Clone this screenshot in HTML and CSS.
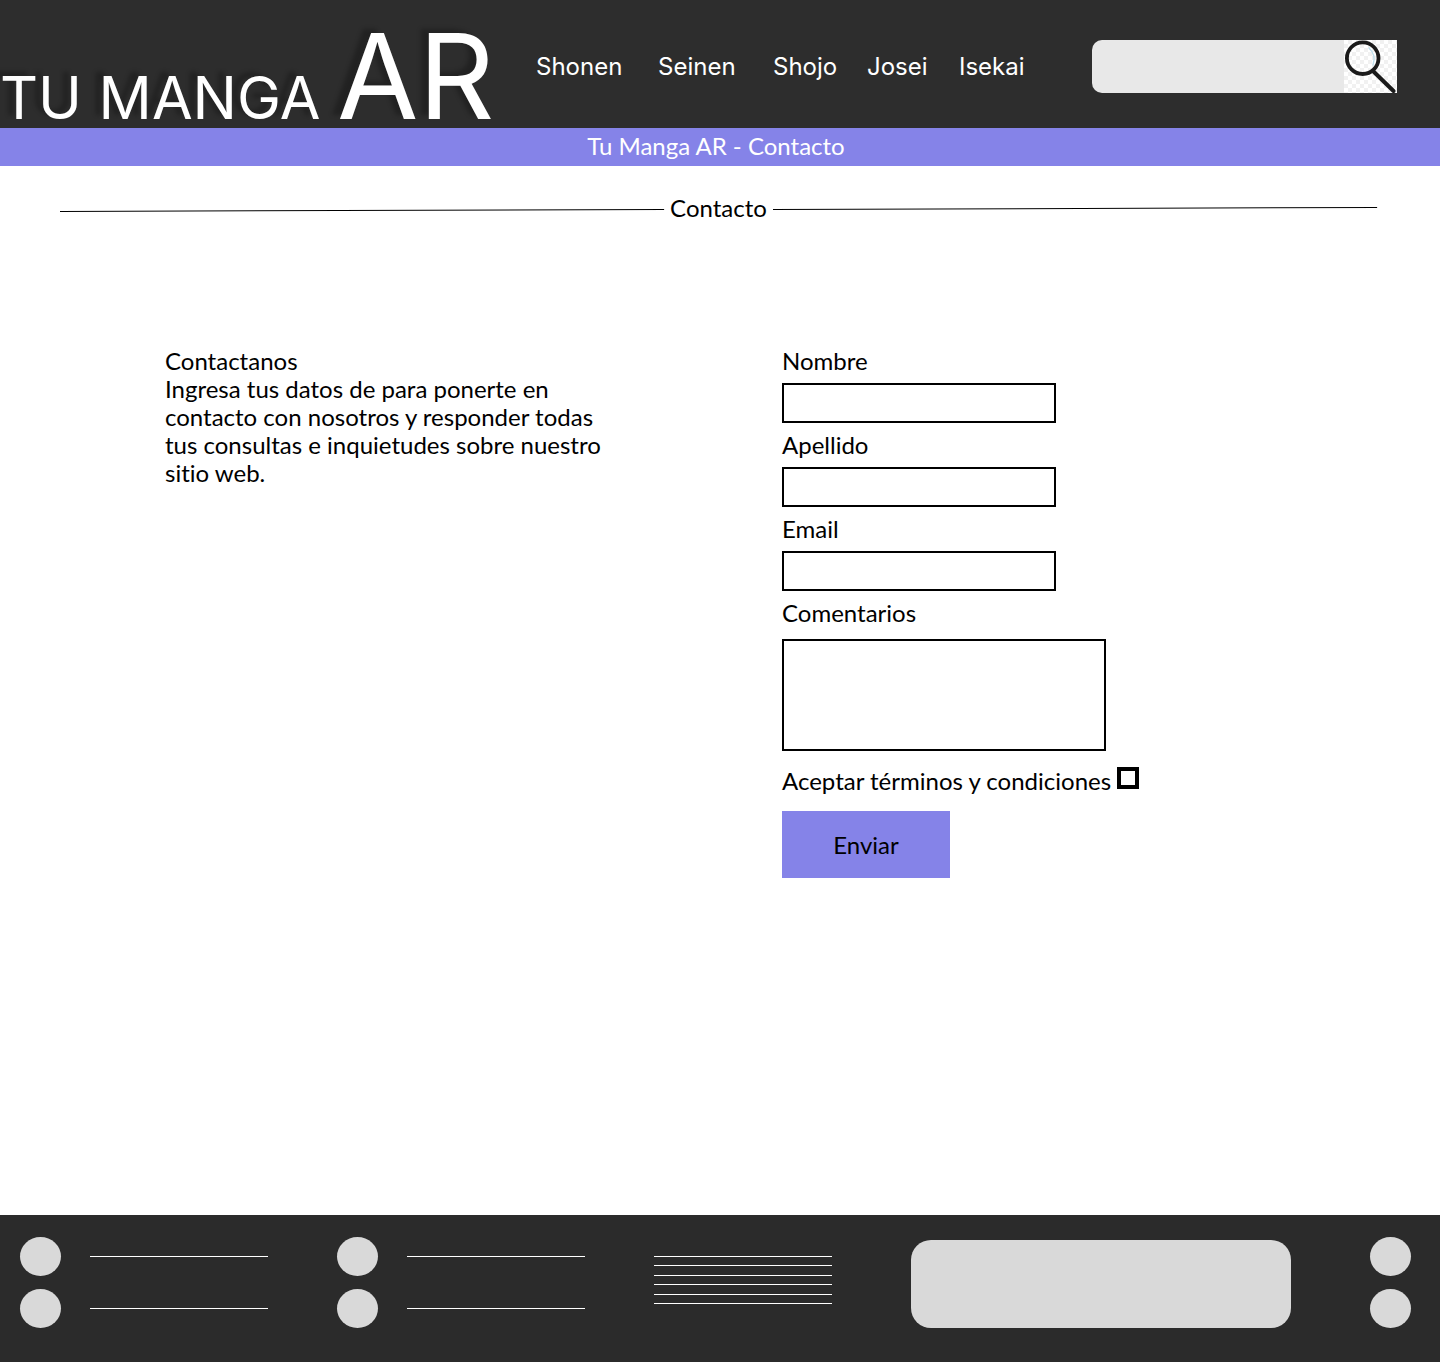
FILE: index.html
```html
<!DOCTYPE html>
<html lang="es">
<head>
  <meta charset="utf-8">
  <meta name="viewport" content="width=device-width, initial-scale=1">
  <title>Tu Manga AR - Contacto</title>
  <link rel="stylesheet" href="styles.css">
</head>
<body>
  <header class="site-header">
    <a class="logo" href="#">TU MANGA <span class="logo-big">AR</span></a>
    <nav class="main-nav">
      <a href="#">Shonen</a>
      <a href="#">Seinen</a>
      <a href="#">Shojo</a>
      <a href="#">Josei</a>
      <a href="#">Isekai</a>
    </nav>
    <form class="search" role="search">
      <input class="search-input" type="search" aria-label="Buscar">
      <button class="search-button" type="submit" aria-label="Buscar">
        <svg width="53" height="53" viewBox="0 0 53 53" fill="none" stroke-linecap="round">
          <path d="M30 32 L49.500 51" stroke="#1a1a1a" stroke-width="4"/>
          <path d="M25 8 Q32.500 15 29 25" stroke="#bfe0ee" stroke-width="1.400"/>
          <circle cx="18.700" cy="18.200" r="15.800" stroke="#1a1a1a" stroke-width="3.800"/>
        </svg>
      </button>
    </form>
  </header>
  <div class="banner">Tu Manga AR - Contacto</div>

  <main class="content">
    <div class="section-title">
      <svg class="rule" viewBox="0 0 604 4" preserveAspectRatio="none" aria-hidden="true"><line x1="0" y1="4.500" x2="604" y2="2.500"/></svg>
      <h1>Contacto</h1>
      <svg class="rule" viewBox="0 0 604 4" preserveAspectRatio="none" aria-hidden="true"><line x1="0" y1="2.500" x2="604" y2="0.500"/></svg>
    </div>

    <div class="columns">
      <section class="intro">
        <h2>Contactanos</h2>
        <p>Ingresa tus datos de para ponerte en contacto con nosotros y responder todas tus consultas e inquietudes sobre nuestro sitio web.</p>
      </section>

      <form class="contact-form">
        <div class="field">
          <label for="nombre">Nombre</label>
          <input id="nombre" type="text">
        </div>
        <div class="field">
          <label for="apellido">Apellido</label>
          <input id="apellido" type="text">
        </div>
        <div class="field">
          <label for="email">Email</label>
          <input id="email" type="email">
        </div>
        <div class="field field-comments">
          <label for="comentarios">Comentarios</label>
          <textarea id="comentarios"></textarea>
        </div>
        <div class="terms">
          <label for="terminos">Aceptar términos y condiciones</label>
          <input id="terminos" type="checkbox">
        </div>
        <button class="submit" type="submit">Enviar</button>
      </form>
    </div>
  </main>

  <footer class="site-footer">
    <div class="footer-links">
      <ul class="entries">
        <li><span class="dot"></span><span class="line"></span></li>
        <li><span class="dot"></span><span class="line"></span></li>
      </ul>
      <ul class="entries">
        <li><span class="dot"></span><span class="line"></span></li>
        <li><span class="dot"></span><span class="line"></span></li>
      </ul>
      <div class="text-lines">
        <span class="line"></span>
        <span class="line"></span>
        <span class="line"></span>
        <span class="line"></span>
        <span class="line"></span>
        <span class="line"></span>
      </div>
    </div>
    <div class="panel"></div>
    <div class="social">
      <span class="dot"></span>
      <span class="dot"></span>
    </div>
  </footer>
</body>
</html>
```
FILE: styles.css
```css
* {
  box-sizing: border-box;
}

body {
  margin: 0;
  min-height: 100vh;
  display: flex;
  flex-direction: column;
  background: #fff;
  color: #000;
  font: 24px/28px Lato, "Noto Sans", sans-serif;
  font-variant-ligatures: none;
}

a {
  color: inherit;
  text-decoration: none;
}

h1,
h2,
p,
ul {
  margin: 0;
  padding: 0;
  font-size: inherit;
  font-weight: 400;
  list-style: none;
}

.site-header {
  display: flex;
  align-items: center;
  min-height: 128px;
  padding-right: 43px;
  background: #2d2d2d;
  color: #fff;
  font-family: Inter, sans-serif;
}

.logo {
  align-self: flex-end;
  width: 536px;
  font-size: 59px;
  line-height: 60px;
  white-space: nowrap;
  text-shadow: -8px -4px 4px rgba(0, 0, 0, 0.25);
}

.logo-big {
  font-size: 118px;
  line-height: 104px;
}

.main-nav {
  display: grid;
  grid-template-columns: 122px 115px 94px 92px auto;
  padding-top: 6px;
}

.search {
  display: flex;
  margin-left: auto;
  padding-top: 4px;
}

.search-input {
  width: 252px;
  height: 53px;
  padding: 0 16px;
  border: 0;
  border-radius: 10px 0 0 10px;
  background: #e8e8e8;
  font: inherit;
}

.search-button {
  width: 53px;
  height: 53px;
  padding: 0;
  border: 0;
  background: repeating-conic-gradient(#f1f1f1 0 25%, #fff 0 50%) 0 0 / 8px 8px;
}

.search-button svg {
  display: block;
}

.banner {
  padding: 4px 8px 6px 0;
  background: #8583e8;
  color: #fff;
  text-align: center;
}

.content {
  flex: 1;
}

.section-title {
  display: flex;
  align-items: center;
  gap: 6px;
  padding: 28px 63px 0 60px;
}

.rule {
  flex: 1;
  min-width: 0;
  height: 4px;
  margin-top: 2px;
  overflow: visible;
}

.rule line {
  stroke: #000;
  stroke-width: 1px;
}

.columns {
  display: grid;
  grid-template-columns: 1fr 1fr;
  gap: 124px;
  padding: 125px 165px 64px;
}

.intro {
  max-width: 440px;
}

.contact-form {
  display: flex;
  flex-direction: column;
  align-items: flex-start;
  gap: 8px;
}

.field {
  display: flex;
  flex-direction: column;
  align-items: flex-start;
  gap: 8px;
}

.field input,
.field textarea {
  width: 274px;
  height: 40px;
  padding: 4px 8px;
  border: 2px solid #000;
  border-radius: 0;
  background: #fff;
  font: inherit;
}

.field-comments {
  gap: 12px;
}

.field textarea {
  width: 324px;
  height: 112px;
  resize: none;
}

.terms {
  display: flex;
  gap: 6px;
  margin: 8px 0;
}

.terms input {
  appearance: none;
  width: 22px;
  height: 22px;
  margin: 0;
  border: 4px solid #000;
}

.terms input:checked {
  background: #8583e8;
}

.submit {
  width: 168px;
  height: 67px;
  padding: 0;
  border: 0;
  background: #8583e8;
  color: #000;
  font: inherit;
}

.site-footer {
  display: flex;
  justify-content: space-between;
  padding: 22px 29px 34px 20px;
  background: #2b2b2b;
}

.footer-links {
  display: flex;
  gap: 69px;
}

.entries,
.social {
  display: flex;
  flex-direction: column;
  gap: 13px;
}

.entries li {
  display: flex;
  align-items: center;
  gap: 29px;
}

.dot {
  width: 41px;
  height: 39px;
  border-radius: 50%;
  background: #d9d9d9;
}

.line {
  width: 178px;
  height: 1px;
  background: #fff;
}

.text-lines {
  display: flex;
  flex-direction: column;
  justify-content: space-between;
  height: 48px;
  margin-top: 19px;
}

.panel {
  width: 380px;
  height: 88px;
  margin-top: 3px;
  border-radius: 20px;
  background: #d9d9d9;
}
```
